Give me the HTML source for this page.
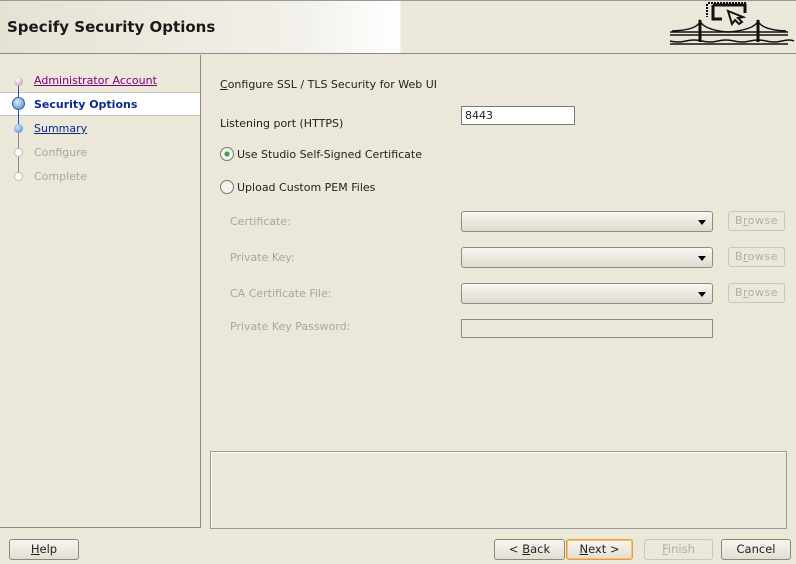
<!DOCTYPE html>
<html><head><style>
*{margin:0;padding:0;box-sizing:border-box}
body{width:796px;height:564px;background:#ebe7d9;font-family:"DejaVu Sans","Liberation Sans",sans-serif;font-size:11px;color:#222;position:relative;overflow:hidden}
.a{position:absolute}
#hdr{left:0;top:0;width:796px;height:54px;border-top:1px solid #999;border-bottom:1px solid #8a8a8a;background:linear-gradient(90deg,#e6e2d3 0%,#f2f0ea 300px,#fff 400px,#ebe7d9 401px)}
.u{text-decoration:underline}
.dis{color:#a8a69e}
.combo{width:252px;height:21px;border:1px solid #8d8b83;border-radius:3px;background:linear-gradient(#f8f7f2,#dedace)}
.combo:after{content:"";position:absolute;right:6px;top:8px;border-left:4px solid transparent;border-right:4px solid transparent;border-top:5px solid #000}
.br{width:57px;height:20px;border:1px solid #c9c6ba;border-radius:3px;color:#b0ada4;text-align:center;line-height:18px;letter-spacing:.5px}
.btn{height:21px;border:1px solid #8a877e;border-radius:3px;background:linear-gradient(#f7f6f1,#e2ded2);text-align:center;line-height:19px;font-size:11.5px}
.dot{width:9px;height:9px;border-radius:50%}
</style></head><body>
<div id="hdr" class="a"></div>
<div class="a" style="left:7px;top:18px;font-size:15px;font-weight:bold;color:#1a1a1a">Specify Security Options</div>
<svg class="a" style="left:600px;top:0" width="196" height="54" viewBox="0 0 196 54">
<g fill="none" stroke="#111">
<path d="M108 3h38" stroke-width="2" stroke-dasharray="2 1"/>
<path d="M107 4v13" stroke-width="2" stroke-dasharray="2 1"/>
<path d="M113 5h20M113 5v14h9M113 19" stroke-width="3"/>
<path d="M133 5h12v8" stroke-width="3"/>
<path d="M128 11l15 6-5 1 4 4-3 2-4-4-3 4z" stroke-width="2" fill="#ebe7d9"/>
<path d="M70 32h118M70 35h118" stroke-width="1.5"/>
<path d="M100 20v22M158 20v22" stroke-width="3"/>
<path d="M72 31q26-1 28-10q4 9 28 11q26-2 30-11q4 9 28 10" stroke-width="1.5"/>
<path d="M70 41q8 2 16 0t16 0 16 0 16 0 16 0 16 0 16 0 12 0M70 44h118" stroke-width="1.5"/>
</g></svg>
<div class="a" style="left:0;top:55px;width:201px;height:473px;border-right:1px solid #8a8a8a;border-bottom:1px solid #8a8a8a"></div>
<div class="a" style="left:0;top:92px;width:200px;height:24px;background:#fff;border-top:1px solid #c8c6c0;border-bottom:1px solid #c8c6c0"></div>
<div class="a" style="left:18px;top:84px;width:1px;height:44px;background:#2050c0"></div>
<div class="a" style="left:18px;top:128px;width:1px;height:48px;background:#888"></div>
<div class="a dot" style="left:14px;top:77px;background:radial-gradient(circle at 40% 35%,#fff,#b080b0)"></div>
<div class="a dot" style="left:12px;top:97px;width:13px;height:13px;background:radial-gradient(circle at 40% 35%,#dfefff,#3a80d0);border:1px solid #3060a0"></div>
<div class="a dot" style="left:14px;top:124px;background:radial-gradient(circle at 40% 35%,#cfe4ff,#3a80d0)"></div>
<div class="a dot" style="left:14px;top:148px;background:#fff;border:1px solid #bbb"></div>
<div class="a dot" style="left:14px;top:172px;background:#fff;border:1px solid #bbb"></div>
<div class="a u" style="left:34px;top:74px;color:#800080">Administrator Account</div>
<div class="a" style="left:34px;top:98px;color:#0a2a8a;font-weight:bold">Security Options</div>
<div class="a u" style="left:34px;top:122px;color:#0a2a8a">Summary</div>
<div class="a dis" style="left:34px;top:146px">Configure</div>
<div class="a dis" style="left:34px;top:170px">Complete</div>

<div class="a" style="left:220px;top:78px"><span class="u">C</span>onfigure SSL / TLS Security for Web UI</div>
<div class="a" style="left:220px;top:117px">Listening port (HTTPS)</div>
<div class="a" style="left:461px;top:106px;width:114px;height:19px;border:1px solid #7a7a7a;background:#fff;padding:2px 3px">8443</div>
<div class="a dot" style="left:220px;top:147px;width:14px;height:14px;border:1px solid #777;background:radial-gradient(circle,#3aa040 0 2px,#f4f3ee 3px)"></div>
<div class="a" style="left:237px;top:148px">Use Studio Self-Signed Certificate</div>
<div class="a dot" style="left:220px;top:180px;width:14px;height:14px;border:1px solid #777;background:#f4f3ee"></div>
<div class="a" style="left:237px;top:181px">Upload Custom PEM Files</div>
<div class="a dis" style="left:230px;top:215px">Certificate:</div>
<div class="a dis" style="left:230px;top:251px">Private Key:</div>
<div class="a dis" style="left:230px;top:287px">CA Certificate File:</div>
<div class="a dis" style="left:230px;top:320px">Private Key Password:</div>
<div class="a combo" style="left:461px;top:211px"></div>
<div class="a combo" style="left:461px;top:247px"></div>
<div class="a combo" style="left:461px;top:283px"></div>
<div class="a br" style="left:728px;top:211px">B<span class="u">r</span>owse</div>
<div class="a br" style="left:728px;top:247px">B<span class="u">r</span>owse</div>
<div class="a br" style="left:728px;top:283px">B<span class="u">r</span>owse</div>
<div class="a" style="left:461px;top:319px;width:252px;height:19px;border:1px solid #8a8a8a"></div>
<div class="a" style="left:210px;top:451px;width:577px;height:78px;border:1px solid #999;box-shadow:inset 1px 1px 0 #fff"></div>

<div class="a btn" style="left:9px;top:539px;width:70px"><span class="u">H</span>elp</div>
<div class="a btn" style="left:494px;top:539px;width:71px">&lt; <span class="u">B</span>ack</div>
<div class="a btn" style="left:566px;top:539px;width:67px;border-color:#e0a040;box-shadow:inset 0 0 0 1px #f5c070"><span class="u">N</span>ext &gt;</div>
<div class="a btn" style="left:644px;top:539px;width:69px;border-color:#c9c6ba;background:none;color:#b0ada4"><span class="u">F</span>inish</div>
<div class="a btn" style="left:721px;top:539px;width:70px">Cancel</div>
</body></html>
